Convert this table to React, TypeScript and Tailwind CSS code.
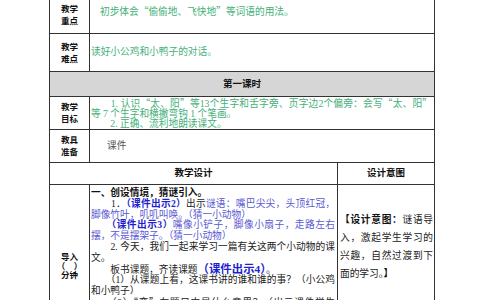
const green = 'text-[#45b079]';
const soft = 'text-[#5a5ad2]';
const strong = 'font-bold text-[#1f1fd0]';
const cjk = "font-['Noto_Sans_CJK_SC']";
// Word lays these lines out justified, so the line runs to the cell edge
const full = 'block whitespace-nowrap [text-align-last:justify]';
const line = 'block whitespace-nowrap';
const indent = '　　';

function Label({ top, bottom }: { top: string; bottom: string }) {
  return (
    <div className="flex w-[40px] shrink-0 flex-col items-center justify-center border-r border-[#333] text-[8.5px] font-bold leading-[12px] text-[#111]">
      <span>{top}</span>
      <span>{bottom}</span>
    </div>
  );
}

export default function App() {
  return (
    <div
      className="h-[300px] w-[484px] overflow-hidden bg-white"
      style={{ fontFamily: '"Liberation Serif", "Noto Sans CJK SC", serif' }}
    >
      <div className="-mt-[3px] ml-[49px] w-[386px] border-x border-[#333] text-[9.7px] text-[#222]">
        {/* 教学重点 */}
        <div className="flex h-[37px] border-b border-[#333]">
          <Label top="教学" bottom="重点" />
          <div className={`flex-1 whitespace-nowrap pl-[10px] pt-[8px] leading-[12px] ${green}`}>
            初步体会<span className={cjk}>“</span>偷偷地、飞快地<span className={cjk}>”</span>等词语的用法。
          </div>
        </div>

        {/* 教学难点 */}
        <div className="flex h-[38px] border-b border-[#333]">
          <Label top="教学" bottom="难点" />
          <div className={`flex flex-1 items-center whitespace-nowrap pl-[1px] ${green}`}>
            读好小公鸡和小鸭子的对话。
          </div>
        </div>

        {/* 第一课时 */}
        <div className="flex h-[25px] items-center justify-center border-b border-[#333] bg-[#d6d6d6] text-[9.5px] font-bold text-[#111]">
          第一课时
        </div>

        {/* 教学目标 */}
        <div className={`flex h-[33px] border-b border-[#333]`}>
          <Label top="教学" bottom="目标" />
          <div className={`flex min-w-0 flex-1 flex-col justify-center pl-[1px] pr-[2px] leading-[10px] ${green}`}>
            <span className={full}>
              {indent + '1. 认识'}
              <span className={cjk}>“</span>太、阳<span className={cjk}>”</span>等13个生字和舌字旁、页字边2个偏旁：会写
              <span className={cjk}>“</span>太、阳<span className={cjk}>”</span>
            </span>
            <span className={line}>等 7 个生字和横撇弯钩 1 个笔画。</span>
            <span className={line}>{indent + '2. 正确、流利地朗读课文。'}</span>
          </div>
        </div>

        {/* 教具准备 */}
        <div className="flex h-[33px] border-b border-[#333]">
          <Label top="教具" bottom="准备" />
          <div className="flex flex-1 items-center pl-[17px] text-[#555]">课件</div>
        </div>

        {/* 教学设计 / 设计意图 */}
        <div className="flex h-[22px] border-b border-[#333] text-[9.5px] font-bold text-[#111]">
          <div className="flex w-[288px] items-center justify-center border-r border-[#333]">教学设计</div>
          <div className="flex flex-1 items-center justify-center">设计意图</div>
        </div>

        {/* 导入 */}
        <div className="flex h-[130px]">
          <div className="flex w-[40px] shrink-0 flex-col items-center border-r border-[#333] pt-[68px] text-[8.5px] font-bold leading-[9px] text-[#111]">
            <span>导入</span>
            <span className="whitespace-pre">{'（　）'}</span>
            <span>分钟</span>
          </div>

          <div className="flex w-[248px] shrink-0 flex-col border-r border-[#333] pl-[1px] pr-[2px] pt-[3px] leading-[10.8px]">
            <span className={`${line} font-bold text-[#111]`}>一、创设情境，猜谜引入。</span>
            <span className={full}>
              {indent + '1．'}
              <span className={strong}>（课件出示2）</span>出示<span className={soft}>谜语：嘴巴尖尖，头顶红冠，</span>
            </span>
            <span className={`${line} ${soft}`}>脚像竹叶，叽叽叫唤。（猜一小动物）</span>
            <span className={full}>
              {indent}
              <span className={strong}>（课件出示3）</span>
              <span className={soft}>嘴像小铲子，脚像小扇子，走路左右</span>
            </span>
            <span className={`${line} ${soft}`}>摆，不是摆架子。（猜一小动物）</span>
            <span className={full}>{indent + '2. 今天，我们一起来学习一篇有关这两个小动物的课'}</span>
            <span className={line}>文。</span>
            <span className={line}>
              {indent + '板书课题，齐读课题'}
              <span className={`${strong} text-[11.4px]`}>（课件出示4）</span>。
            </span>
            <span className={full}>{indent + '（1）从课题上看，这课书讲的谁和谁的事？（小公鸡'}</span>
            <span className={line}>和小鸭子）</span>
            <span className={full}>
              {indent + '（2）'}
              <span className={cjk}>“</span>变<span className={cjk}>”</span>在题目中是什么意思？（出示课件学生
            </span>
          </div>

          <div className="flex-1 pl-[2px] pr-[1px] pt-[26px] text-justify leading-[18px] text-[#222]">
            <span className="font-bold text-[#111]">【设计意图：</span>
            谜语导入，激起学生学习的兴趣，自然过渡到下面的学习。
            <span className="font-bold text-[#111]">】</span>
          </div>
        </div>
      </div>
    </div>
  );
}
